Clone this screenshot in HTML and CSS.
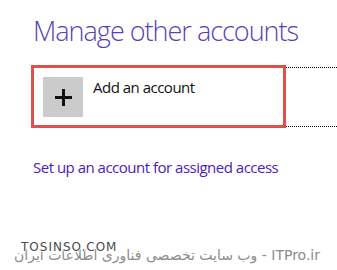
FILE: index.html
```html
<!DOCTYPE html>
<html lang="en">
<head>
    <meta charset="UTF-8">
    <meta name="viewport" content="width=device-width, initial-scale=1.0">
    <title>Manage other accounts</title>
    <link rel="stylesheet" href="styles.css">
</head>
<body>

    <main class="page">
        <h1 class="page-title">Manage other accounts</h1>

        <div class="account-row">
            <div class="account-tile">
                <span class="add-icon">
                    <svg width="19" height="19" viewBox="0 0 19 19">
                        <path d="M9.5 1v17M1 9.5h17" stroke="#111" stroke-width="3"/>
                    </svg>
                </span>
                <span class="account-label">Add an account</span>
            </div>
            <div class="row-rule"></div>
        </div>

        <a class="assigned-link" href="#">Set up an account for assigned access</a>
    </main>

    <!-- watermark over the bottom of the screenshot -->
    <div class="watermark">
        <span class="wm-fa" dir="ltr">وب سایت تخصصی فناوری اطلاعات ایران - ITPro.ir</span>
        <span class="wm-site">TOSINSO.COM</span>
    </div>

</body>
</html>
```

FILE: styles.css
```css
body {
    margin: 0;
    padding: 0;
    background: #fff;
    font-family: "Open Sans", "Noto Sans", sans-serif;
    color: #111;
    width: 337px;
    height: 270px;
    overflow: hidden;
    position: relative;
}
.page {
    padding-top: 13px;
}
.page-title {
    margin: 0 0 16px 33px;
    font-size: 27px;
    font-weight: 300;
    line-height: 36px;
    letter-spacing: -1px;
    color: #5a3fbd;
}
.account-row {
    display: flex;
    align-items: flex-start;
    margin-left: 31px;
}
.account-tile {
    display: flex;
    align-items: flex-start;
    gap: 10px;
    width: 255px;
    height: 63px;
    box-sizing: border-box;
    padding: 9px 9px 8px 9px;
    border: 3px solid #da524e;
}
.add-icon {
    display: flex;
    align-items: center;
    justify-content: center;
    width: 40px;
    height: 40px;
    background: #cbcbcb;
}
.add-icon svg {
    display: block;
}
.account-label {
    font-size: 15px;
    line-height: 20px;
    letter-spacing: -0.5px;
    color: #111;
}
.row-rule {
    flex: 1;
    height: 60px;
    margin-top: 2px;
    box-sizing: border-box;
    border-top: 1px dotted #000;
    border-bottom: 1px dotted #000;
}
.assigned-link {
    display: block;
    margin: 29px 0 0 33px;
    font-size: 15px;
    line-height: 20px;
    letter-spacing: -0.5px;
    color: #4a20c4;
    text-decoration: none;
}
.watermark {
    position: absolute;
    left: 18px;
    top: 240px;
    width: 302px;
    height: 24px;
}
.wm-fa {
    position: absolute;
    right: 0;
    top: 6px;
    font-family: "DejaVu Sans", "Noto Sans", sans-serif;
    font-size: 14px;
    line-height: 18px;
    color: #8c8c8c;
    white-space: nowrap;
    text-shadow: 1px 1px 0 #fff, -1px -1px 0 #fff;
}
.wm-site {
    position: absolute;
    left: 3px;
    top: 0;
    font-family: "DejaVu Sans", sans-serif;
    font-size: 12px;
    line-height: 14px;
    color: #4a4a4a;
    letter-spacing: 1px;
    text-shadow: 1px 0 0 #fff, -1px 0 0 #fff, 0 1px 0 #fff, 0 -1px 0 #fff;
}
```
